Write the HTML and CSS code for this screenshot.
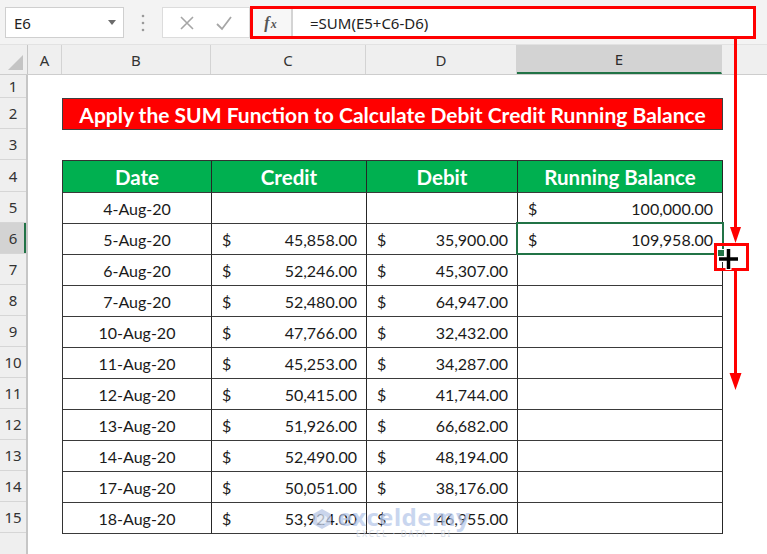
FILE: index.html
```html
<!DOCTYPE html>
<html>
<head>
<meta charset="utf-8">
<link rel="stylesheet" href="styles.css">
</head>
<body>
<div class="app">
  <div class="toolbar">
    <div class="namebox"><span class="nb-text">E6</span><span class="caret"></span></div>
    <div class="grip">
      <svg width="4" height="18" viewBox="0 0 4 18"><circle cx="2" cy="2" r="1.3" fill="#9a9a9a"/><circle cx="2" cy="9" r="1.3" fill="#9a9a9a"/><circle cx="2" cy="16" r="1.3" fill="#9a9a9a"/></svg>
    </div>
    <div class="btns">
      <svg class="ic" width="16" height="16" viewBox="0 0 16 16"><path d="M2 2 L14 14 M14 2 L2 14" stroke="#a6a6a6" stroke-width="1.6" fill="none"/></svg>
      <svg class="ic" width="18" height="16" viewBox="0 0 18 16"><path d="M2 9 L7 14 L16 2" stroke="#a6a6a6" stroke-width="1.8" fill="none"/></svg>
    </div>
    <div class="fx"><span class="fx-f">f</span><span class="fx-x">x</span></div>
    <div class="formula">=SUM(E5+C6-D6)</div>
  </div>

  <div class="colheads">
    <div class="ch corner"><span class="tri"></span></div>
    <div class="ch w-a">A</div>
    <div class="ch w-b">B</div>
    <div class="ch w-c">C</div>
    <div class="ch w-d">D</div>
    <div class="ch w-e sel">E</div>
    <div class="ch w-f"></div>
  </div>

  <div class="body">
    <div class="rowheads">
      <div class="rh h1">1</div>
      <div class="rh h31">2</div>
      <div class="rh h31">3</div>
      <div class="rh h32">4</div>
      <div class="rh h31">5</div>
      <div class="rh h31 sel">6</div>
      <div class="rh h31">7</div>
      <div class="rh h31">8</div>
      <div class="rh h31">9</div>
      <div class="rh h31">10</div>
      <div class="rh h31">11</div>
      <div class="rh h31">12</div>
      <div class="rh h31">13</div>
      <div class="rh h31">14</div>
      <div class="rh h31">15</div>
      <div class="rh h31"></div>
    </div>

    <div class="sheet">
      <div class="sp1"></div>
      <div class="title">Apply the SUM Function to Calculate Debit Credit Running Balance</div>
      <div class="sp3"></div>
      <div class="tbl">
        <div class="hd">Date</div><div class="hd">Credit</div><div class="hd">Debit</div><div class="hd">Running Balance</div>

        <div class="c dt">4-Aug-20</div><div class="c"></div><div class="c"></div><div class="c m"><span>$</span><span>100,000.00</span></div>
        <div class="c dt">5-Aug-20</div><div class="c m"><span>$</span><span>45,858.00</span></div><div class="c m"><span>$</span><span>35,900.00</span></div><div class="c m"><span>$</span><span>109,958.00</span></div>
        <div class="c dt">6-Aug-20</div><div class="c m"><span>$</span><span>52,246.00</span></div><div class="c m"><span>$</span><span>45,307.00</span></div><div class="c"></div>
        <div class="c dt">7-Aug-20</div><div class="c m"><span>$</span><span>52,480.00</span></div><div class="c m"><span>$</span><span>64,947.00</span></div><div class="c"></div>
        <div class="c dt">10-Aug-20</div><div class="c m"><span>$</span><span>47,766.00</span></div><div class="c m"><span>$</span><span>32,432.00</span></div><div class="c"></div>
        <div class="c dt">11-Aug-20</div><div class="c m"><span>$</span><span>45,253.00</span></div><div class="c m"><span>$</span><span>34,287.00</span></div><div class="c"></div>
        <div class="c dt">12-Aug-20</div><div class="c m"><span>$</span><span>50,415.00</span></div><div class="c m"><span>$</span><span>41,744.00</span></div><div class="c"></div>
        <div class="c dt">13-Aug-20</div><div class="c m"><span>$</span><span>51,926.00</span></div><div class="c m"><span>$</span><span>66,682.00</span></div><div class="c"></div>
        <div class="c dt">14-Aug-20</div><div class="c m"><span>$</span><span>52,490.00</span></div><div class="c m"><span>$</span><span>48,194.00</span></div><div class="c"></div>
        <div class="c dt">17-Aug-20</div><div class="c m"><span>$</span><span>50,051.00</span></div><div class="c m"><span>$</span><span>38,176.00</span></div><div class="c"></div>
        <div class="c dt">18-Aug-20</div><div class="c m"><span>$</span><span>53,924.00</span></div><div class="c m"><span>$</span><span>46,955.00</span></div><div class="c"></div>
      </div>
    </div>
  </div>

  <div class="watermark">
    <svg class="wm-logo" width="20" height="22" viewBox="0 0 20 22"><path d="M10 1 L19 6 L19 16 L10 21 L1 16 L1 6 Z" fill="#b9c8e6"/><path d="M10 6 L15 9 L15 14 L10 17 L5 14 L5 9 Z" fill="#dfe7f5"/></svg>
    <div class="wm-text"><span class="wm-name">exceldemy</span><span class="wm-sub">EXCEL · DATA · BI</span></div>
  </div>

  <div class="selbox"></div>
  <div class="handle"></div>

  <div class="redframe"></div>

  <svg class="annot" width="767" height="554" viewBox="0 0 767 554">
    <line x1="735.5" y1="38" x2="735.5" y2="230" stroke="#ff0000" stroke-width="3"/>
    <polygon points="730,227 741,227 735.5,243" fill="#ff0000"/>
    <rect x="715.5" y="244.5" width="32" height="25" fill="none" stroke="#ff0000" stroke-width="3"/>
    <path d="M718 259 H739 M728.5 248 V270" stroke="#ffffff" stroke-width="6" fill="none"/>
    <path d="M719 259 H738 M728.5 249 V269" stroke="#000000" stroke-width="3.5" fill="none"/>
    <line x1="735.5" y1="271" x2="735.5" y2="376" stroke="#ff0000" stroke-width="3"/>
    <polygon points="729.5,373 741.5,373 735.5,390" fill="#ff0000"/>
  </svg>
</div>
</body>
</html>
```

FILE: styles.css
```css
* { box-sizing: border-box; }

body {
  margin: 0;
  background: #ffffff;
  font-family: "Noto Sans", "Open Sans", sans-serif;
}

.app {
  position: relative;
  width: 767px;
  height: 554px;
  overflow: hidden;
  background: #ffffff;
}

/* ---------- formula bar ---------- */
.toolbar {
  height: 45px;
  background: #f3f3f3;
  display: flex;
  align-items: flex-start;
  padding-top: 7px;
  border-bottom: 1px solid #e2e2e2;
}

.namebox {
  margin-left: 5px;
  width: 119px;
  height: 31px;
  background: #ffffff;
  border: 1px solid #cfcfcf;
  display: flex;
  align-items: center;
  justify-content: space-between;
  padding: 0 7px 0 8px;
  font-size: 15px;
  color: #222222;
}

.caret {
  width: 0;
  height: 0;
  border-left: 4px solid transparent;
  border-right: 4px solid transparent;
  border-top: 5px solid #6b6b6b;
}

.grip {
  width: 38px;
  height: 31px;
  display: flex;
  align-items: center;
  justify-content: center;
}

.btns {
  width: 88px;
  height: 31px;
  background: #ffffff;
  border: 1px solid #dcdcdc;
  display: flex;
  align-items: center;
  justify-content: space-around;
  padding: 0 6px;
}

.fx {
  width: 43px;
  height: 31px;
  background: #f7f7f7;
  border-right: 2px solid #d4d4d4;
  display: flex;
  align-items: center;
  justify-content: center;
  font-family: "Liberation Serif", serif;
  font-style: italic;
  font-weight: 700;
  color: #555555;
  font-size: 16px;
}

.fx-x {
  font-size: 12px;
  margin-left: 1px;
  margin-top: 4px;
}

.formula {
  flex: 1;
  height: 31px;
  margin-right: 13px;
  background: #ffffff;
  display: flex;
  align-items: center;
  padding-left: 17px;
  font-size: 15px;
  color: #222222;
}

.redframe {
  position: absolute;
  left: 250px;
  top: 6px;
  width: 506px;
  height: 33px;
  border: 3px solid #ff0000;
}

/* ---------- column headers ---------- */
.colheads {
  display: flex;
  height: 30px;
  background: #efefef;
  border-bottom: 1px solid #cdcdcd;
}

.ch {
  flex: none;
  height: 100%;
  border-right: 1px solid #d3d3d3;
  display: flex;
  align-items: center;
  justify-content: center;
  font-size: 15px;
  color: #333333;
}

.corner {
  width: 28px;
  align-items: flex-end;
  justify-content: flex-end;
  padding: 0 4px 4px 0;
  border-right: 1px solid #c6c6c6;
}

.tri {
  width: 0;
  height: 0;
  border-left: 15px solid transparent;
  border-bottom: 15px solid #c4c4c4;
}

.w-a { width: 34px; }
.w-b { width: 149px; }
.w-c { width: 155px; }
.w-d { width: 151px; }
.w-e { width: 205px; }
.w-f { flex: 1; border-right: none; }

.ch.sel {
  background: #d3d3d3;
  border-bottom: 2px solid #217346;
  color: #2b2b2b;
}

/* ---------- body ---------- */
.body {
  display: flex;
}

.rowheads {
  width: 28px;
  flex: none;
  background: #efefef;
  border-right: 2px solid #c6c6c6;
}

.rh {
  display: flex;
  align-items: center;
  justify-content: center;
  border-bottom: 1px solid #d6d6d6;
  font-size: 15px;
  color: #333333;
}

.h1 { height: 23px; }
.h31 { height: 31px; }
.h32 { height: 32px; }

.rh.sel {
  background: #d3d3d3;
  box-shadow: inset -2px 0 0 #217346;
}

.sheet {
  padding-left: 34px;
  font-family: "Lato", "Liberation Sans", sans-serif;
}

.sp1 { height: 23px; }
.sp3 { height: 30px; }

.title {
  width: 661px;
  height: 32px;
  background: #ff0000;
  border: 1px solid #3f3f3f;
  color: #ffffff;
  font-weight: 700;
  font-size: 21px;
  display: flex;
  align-items: center;
  justify-content: center;
  white-space: nowrap;
}

.tbl {
  display: grid;
  grid-template-columns: 149px 155px 151px 205px;
  grid-template-rows: 32px repeat(11, 31px);
  width: 661px;
  border-left: 1px solid #333333;
  border-top: 1px solid #333333;
}

.tbl > div {
  border-right: 1px solid #262626;
  border-bottom: 1px solid #3a3a3a;
}

.hd {
  background: #00b050;
  color: #ffffff;
  font-weight: 700;
  font-size: 20.5px;
  display: flex;
  align-items: center;
  justify-content: center;
}

.c {
  font-size: 16px;
  color: #1a1a1a;
  display: flex;
  align-items: center;
  padding-top: 1px;
}

.dt { justify-content: center; }

.m {
  justify-content: space-between;
  padding: 1px 9px 0 10px;
}

/* ---------- selection ---------- */
.selbox {
  position: absolute;
  left: 516px;
  top: 222px;
  width: 208px;
  height: 33px;
  border: 2px solid #217346;
}

.handle {
  position: absolute;
  left: 717px;
  top: 249px;
  width: 8px;
  height: 8px;
  background: #217346;
  border: 1px solid #ffffff;
}

.annot {
  position: absolute;
  left: 0;
  top: 0;
  pointer-events: none;
}

/* ---------- watermark ---------- */
.watermark {
  position: absolute;
  left: 312px;
  top: 505px;
  display: flex;
  align-items: flex-start;
  gap: 6px;
  opacity: 0.75;
  pointer-events: none;
}

.wm-logo { margin-top: 3px; }

.wm-text {
  display: flex;
  flex-direction: column;
  align-items: center;
  font-family: "Noto Sans", sans-serif;
  line-height: 1;
}

.wm-name {
  font-size: 24px;
  font-weight: 700;
  color: #b8c9ea;
  letter-spacing: 0.5px;
}

.wm-sub {
  font-size: 8px;
  color: #c9d2e0;
  letter-spacing: 2px;
  margin-top: 1px;
}
```
